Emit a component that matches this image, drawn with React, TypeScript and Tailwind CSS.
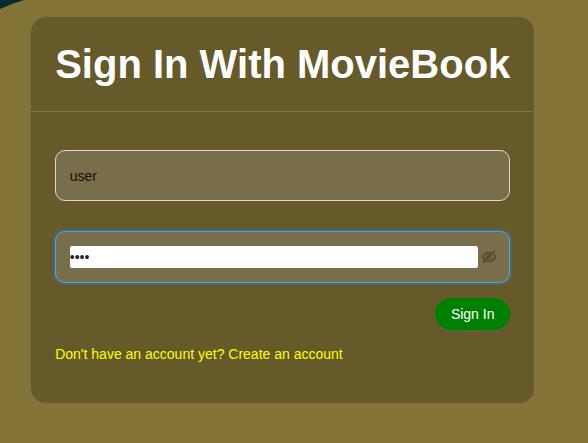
import { AiOutlineEyeInvisible } from "react-icons/ai";

export default function App() {
  return (
    <div className="relative h-[443px] w-[588px] overflow-hidden bg-[#857437] pl-[30.2px] pt-4 font-['Liberation_Sans',Arial,sans-serif] text-sm">
      <svg className="absolute top-0 left-0" width="24" height="10" viewBox="0 0 24 10">
        <path d="M0 0H24L12 4L0 9Z" fill="#032b30" />
      </svg>
      <main className="h-[388px] w-[504.6px] rounded-2xl border border-[#7b7049] bg-[#665a2a]">
        <header className="flex h-[95px] items-center border-b border-[#7f734a] px-6">
          <h1 className="text-[40px] leading-[60px] font-bold whitespace-nowrap text-white">
            Sign In With MovieBook
          </h1>
        </header>
        <form className="flex flex-col px-6 pt-[38px]">
          <input
            type="text"
            defaultValue="user"
            className="h-[51px] w-full rounded-[10px] border border-[#d9d9d9] bg-[#796e4a] px-[13.6px] text-black/88 outline-none"
          />
          <div className="mt-[30px] flex h-[52px] items-center rounded-[10px] border border-[#40a9ff] bg-[#796e4a] pr-3 pl-[13.6px] shadow-[0_0_0_2px_rgba(24,144,255,0.25)]">
            <input
              type="password"
              defaultValue="user"
              className="h-[22px] min-w-0 flex-1 rounded-[2px] bg-white text-black/88 outline-none"
            />
            <AiOutlineEyeInvisible className="ml-[3px] size-4 shrink-0 text-black/45" />
          </div>
          <button
            type="button"
            className="mt-[15px] h-8 w-[75px] self-end rounded-full bg-[#008000] pl-[0.8px] text-white shadow-[0_2px_0_rgba(5,145,255,0.1)]"
          >
            Sign In
          </button>
          <a href="#" className="mt-[13px] self-start leading-[22px] text-[#ffff00]">
            Don't have an account yet? Create an account
          </a>
        </form>
      </main>
    </div>
  );
}
